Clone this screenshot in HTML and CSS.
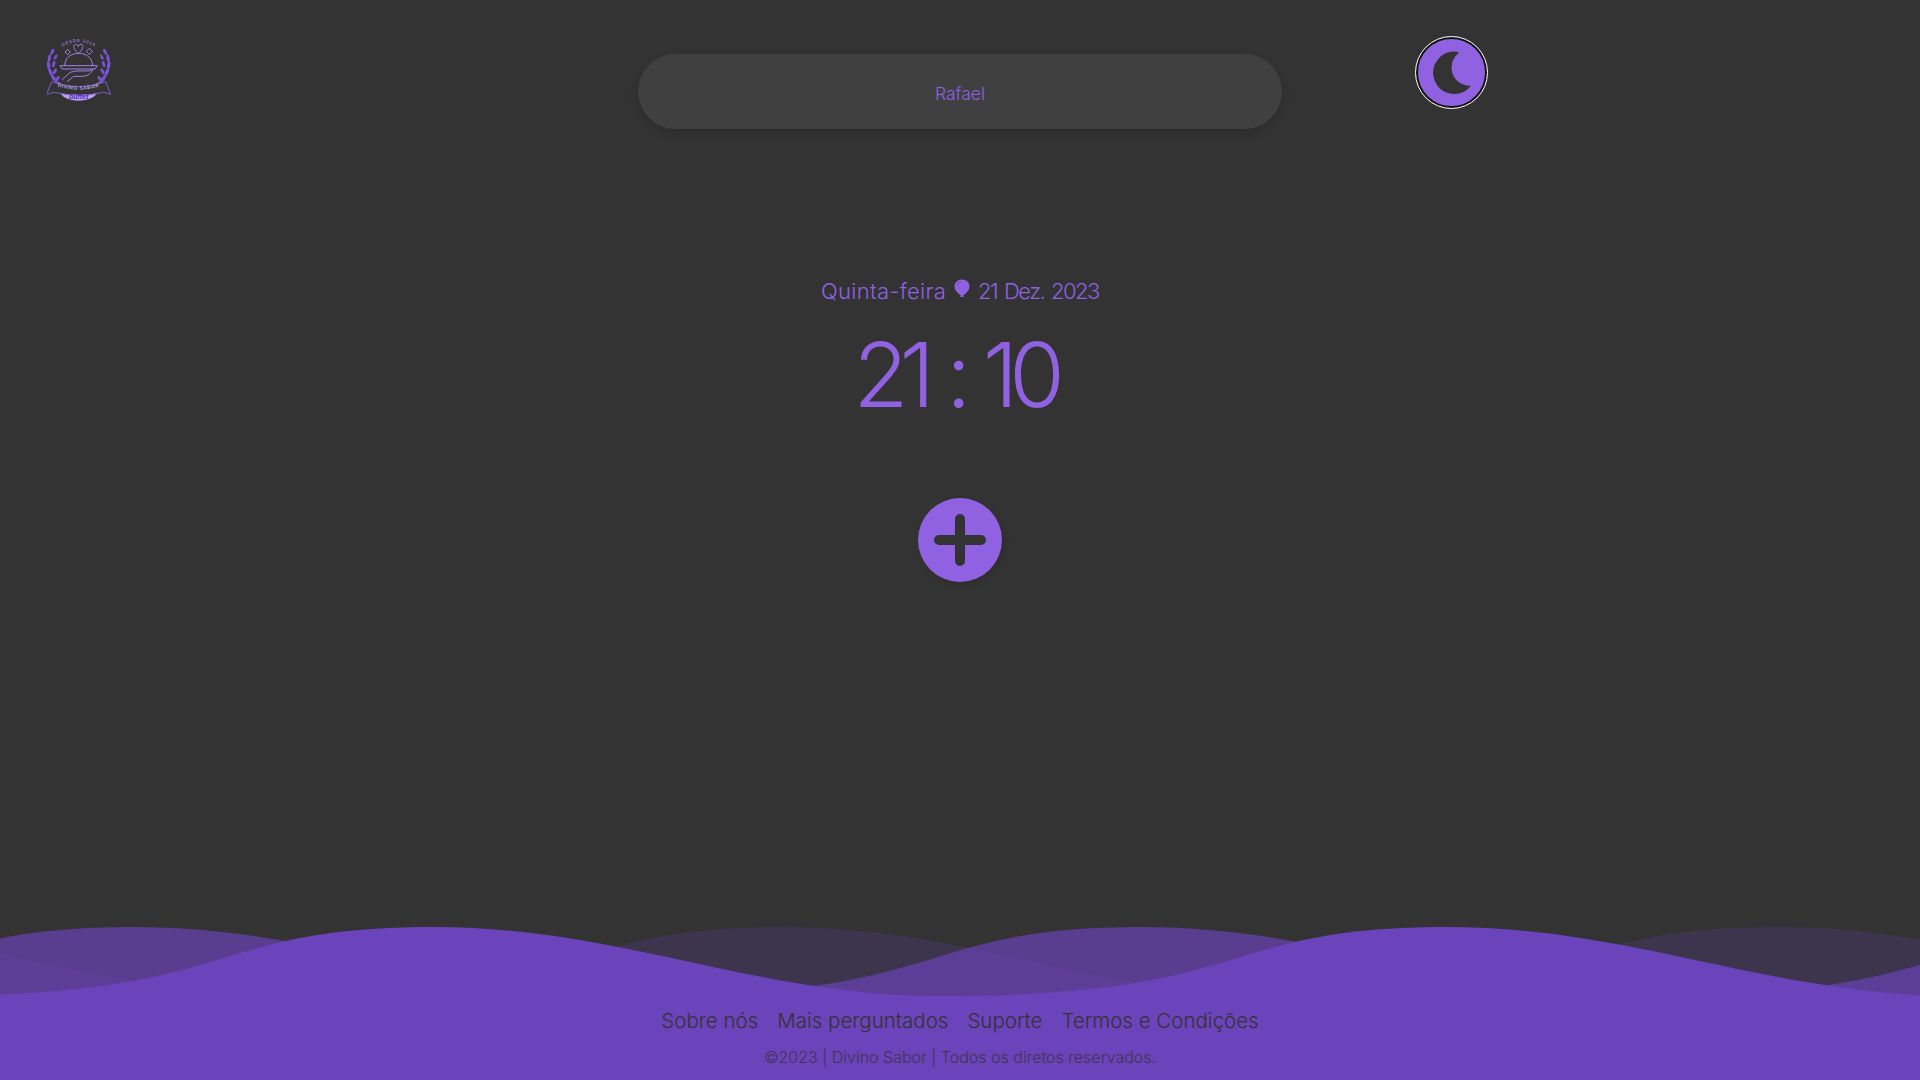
FILE: index.html
```html
<!DOCTYPE html>
<html lang="pt-BR">
<head>
<title>Divino Sabor</title>
<meta charset="utf-8">
<link rel="stylesheet" href="styles.css">
</head>
<body>
<header class="top">
  <a class="logo" href="#">
    <svg width="65" height="65" viewBox="80 50 195 195">
      <defs>
        <path id="arc-top" d="M108 92 Q175 38 242 92"/>
        <path id="arc-ban" d="M100 194 Q175 222 250 194"/>
        <g id="laurel" fill="#7d52d6">
          <ellipse cx="137" cy="198" rx="5" ry="11" transform="rotate(-62 137 198)"/>
          <ellipse cx="120" cy="186" rx="4.5" ry="11" transform="rotate(-50 120 186)"/>
          <ellipse cx="107" cy="171" rx="4.5" ry="11" transform="rotate(-32 107 171)"/>
          <ellipse cx="98" cy="154" rx="4.5" ry="11" transform="rotate(-20 98 154)"/>
          <ellipse cx="93" cy="135" rx="4.5" ry="11" transform="rotate(-8 93 135)"/>
          <ellipse cx="95" cy="116" rx="4" ry="10" transform="rotate(8 95 116)"/>
          <ellipse cx="103" cy="99" rx="4" ry="9" transform="rotate(25 103 99)"/>
          <ellipse cx="117" cy="172" rx="4" ry="9" transform="rotate(42 117 172)"/>
          <ellipse cx="110" cy="152" rx="4" ry="9" transform="rotate(28 110 152)"/>
          <ellipse cx="107" cy="132" rx="4" ry="9" transform="rotate(16 107 132)"/>
          <ellipse cx="112" cy="113" rx="3.5" ry="8" transform="rotate(32 112 113)"/>
        </g>
      </defs>
      <text class="logo-small"><textPath href="#arc-top" startOffset="50%" text-anchor="middle">DESDE 2015</textPath></text>
      <use href="#laurel" transform="translate(-17.5 -14) scale(1.1)"/>
      <use href="#laurel" transform="matrix(-1.1 0 0 1.1 367.5 -14)"/>
      <path class="logo-line" d="M174 99 C160 90 156 72 166 72 C171 72 174 76 174 79 C174 76 177 72 182 72 C192 72 188 90 174 99Z"/>
      <path class="logo-line" d="M142 87 L150 95 L142 103 L134 95Z M207 84 L216 93 L207 102 L198 93Z"/>
      <path class="logo-line" d="M133 136 C134 112 152 99 175 99 C198 99 216 112 217 136"/>
      <path class="logo-line" d="M119 136 H231 L224 146 H126Z"/>
      <path class="logo-line" d="M125 178 L150 156 C165 150 185 152 205 152 L218 147 C212 160 200 168 186 168 L160 168 L140 184"/>
      <path class="logo-pill" d="M118 212 Q175 226 232 212 C228 232 202 241 175 241 C148 241 122 232 118 212Z"/>
      <path class="logo-band" d="M94 184 Q175 214 256 184 L271 222 L250 216 Q175 232 100 216 L79 222Z"/>
      <text class="logo-name"><textPath href="#arc-ban" startOffset="50%" text-anchor="middle">DIVINO SABOR</textPath></text>
      <text class="logo-buffet" x="175" y="237" text-anchor="middle">buffet</text>
    </svg>
  </a>
  <div class="user-bar"><span>Rafael</span></div>
  <button class="theme-btn" type="button">
    <svg width="43" height="47" viewBox="120 85 130 140"><path class="moon" d="M205 95 A62 62 0 1 0 240 197 A57 57 0 0 1 205 95Z"/></svg>
  </button>
</header>

<main class="center">
  <div class="date">
    <span class="day">Quinta-feira</span>
    <svg class="balloon" width="16" height="20" viewBox="0 0 16 20">
      <path fill="#9061e0" d="M8 .5 C12.500 .5 15.500 3.500 15.500 7.500 C15.500 11.500 11 15.500 9 16.500 L10 18 H6 L7 16.500 C5 15.500 .5 11.500 .5 7.500 C.5 3.500 3.500 .5 8 .5Z"/>
      <path fill="none" stroke="#6d45bd" stroke-width="1" d="M3.500 6 C4 4 5 3 7 2.500"/>
    </svg>
    <span class="day-num">21 Dez. 2023</span>
  </div>
  <div class="clock">21 : 10</div>
  <button class="add-btn" type="button">
    <svg width="52" height="52" viewBox="0 0 52 52"><path d="M26 5 V47 M5 26 H47" fill="none" stroke="#333" stroke-width="10" stroke-linecap="round"/></svg>
  </button>
</main>

<footer class="foot">
  <svg class="waves" width="1920" height="70" viewBox="0 0 1920 70" preserveAspectRatio="none">
    <path class="wave-c" d="M-212 0 C-31 0 105 69 286 69 C600 69 555 0 784 0 C965 0 1101 69 1282 69 C1596 69 1551 0 1780 0 C1961 0 2097 69 2278 69 V70 H-212Z"/>
    <path class="wave-b" d="M-369 69 C-51 69 -97 0 135 0 C319 0 455 69 639 69 C957 69 911 0 1143 0 C1327 0 1463 69 1647 69 C1965 69 1919 0 2151 0 V70 H-369Z"/>
    <path class="wave-a" d="M-75 69 C246 69 200 0 435 0 C619 0 756 69 940 69 C1260 69 1214 0 1447 0 C1633 0 1771 69 1957 69 V70 H-75Z"/>
  </svg>
  <div class="foot-body">
    <nav class="foot-nav">
      <a href="#">Sobre nós</a>
      <a href="#">Mais perguntados</a>
      <a href="#">Suporte</a>
      <a href="#">Termos e Condições</a>
    </nav>
    <p class="copy">©2023 | Divino Sabor | Todos os diretos reservados.</p>
  </div>
</footer>
</body>
</html>
```

FILE: styles.css
```css
* { margin: 0; padding: 0; box-sizing: border-box; }
html, body { height: 100%; }
body { display: flex; flex-direction: column; height: 100vh; overflow: hidden; background-color: #333; color: #9061e0; font-family: 'Inter', 'Liberation Sans', sans-serif; font-weight: 300; }
a { color: inherit; text-decoration: none; }
button { border: 0; background: none; cursor: pointer; }

.top { display: grid; grid-template-columns: 1fr 644px 1fr; align-items: start; }
.logo { display: block; padding: 37px 0 0 47px; }
.logo svg { display: block; }
.user-bar { display: flex; align-items: center; justify-content: center; height: 75px; margin-top: 54px; padding-top: 4px; border-radius: 38px; background-color: #404040; box-shadow: 0 4px 10px rgba(0, 0, 0, .15); font-size: 17.500px; }
.theme-btn { display: flex; align-items: center; justify-content: center; width: 71px; height: 71px; margin: 37px 0 0 134px; border-radius: 50%; background-color: #9061e0; border: 2px solid #111; outline: 1.5px solid #fff; }
.moon { fill: #333; stroke: #333; stroke-width: 4; stroke-linejoin: round; }

.center { flex: 1; display: flex; flex-direction: column; align-items: center; padding-top: 146px; }
.date { display: flex; align-items: center; gap: 8px; height: 32px; font-size: 22px; }
.day { letter-spacing: .3px; }
.day-num { letter-spacing: -1.500px; word-spacing: 2px; }
.balloon { margin-top: -5px; }
.clock { margin: 16px 11px 0 0; font-size: 90px; line-height: 104px; letter-spacing: -9px; word-spacing: 4px; white-space: pre; }
.add-btn { display: flex; align-items: center; justify-content: center; width: 84px; height: 84px; margin-top: 71px; border-radius: 50%; background-color: #9061e0; box-shadow: 2px 3px 6px rgba(0, 0, 0, .12); }

.waves { display: block; }
.wave-a { fill: #6b43ba; }
.wave-b { fill: #6b43ba; fill-opacity: .68; }
.wave-c { fill: #6b43ba; fill-opacity: .2; }
.foot-body { display: flex; flex-direction: column; align-items: center; height: 83px; background-color: #6b43ba; color: #333; }
.foot-nav { display: flex; gap: 19px; margin-top: 10px; font-size: 20.500px; line-height: 28px; }
.copy { margin-top: 11px; font-size: 16px; line-height: 22px; opacity: .8; }

.logo-small { fill: #9379d0; font: 700 13px 'Liberation Sans', sans-serif; letter-spacing: 2.500px; }
.logo-line { fill: none; stroke: #a080e6; stroke-width: 3; stroke-linejoin: round; }
.logo-band { fill: #333; stroke: #7d62b8; stroke-width: 3; stroke-linejoin: round; }
.logo-name { fill: #b9a2ee; font: 700 15px 'Liberation Sans', sans-serif; letter-spacing: 1.500px; }
.logo-pill { fill: #b79ff0; }
.logo-buffet { fill: #5a33b0; font: italic 700 21px 'Liberation Sans', sans-serif; }
```
